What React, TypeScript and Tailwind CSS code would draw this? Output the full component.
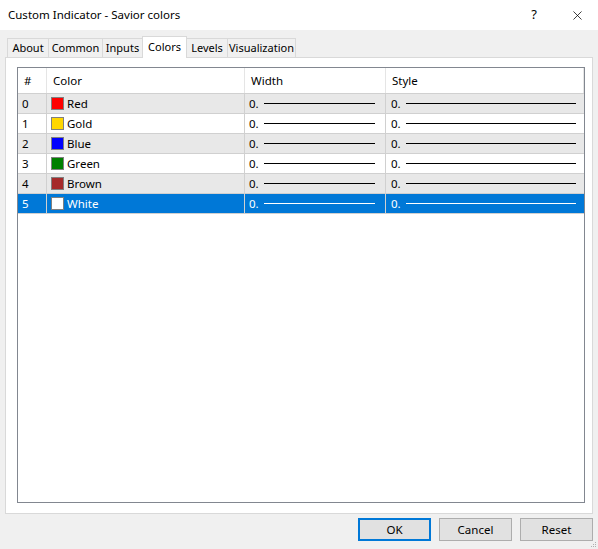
import { X } from 'lucide-react';

interface Row {
  id: number;
  name: string;
  color: string;
}

const rows: Row[] = [
  { id: 0, name: 'Red', color: 'bg-[#ff0000]' },
  { id: 1, name: 'Gold', color: 'bg-[#ffd700]' },
  { id: 2, name: 'Blue', color: 'bg-[#0000ff]' },
  { id: 3, name: 'Green', color: 'bg-[#008000]' },
  { id: 4, name: 'Brown', color: 'bg-[#a52a2a]' },
  { id: 5, name: 'White', color: 'bg-white' },
];

const tabs = [
  { label: 'About', w: 'w-[42px]' },
  { label: 'Common', w: 'w-[55px]' },
  { label: 'Inputs', w: 'w-[41px]' },
  { label: 'Colors', w: 'w-[45px]' },
  { label: 'Levels', w: 'w-[42px]' },
  { label: 'Visualization', w: 'w-[69px]' },
];

function Tab({ label, w, active }: { label: string; w: string; active: boolean }) {
  if (active) {
    return (
      <div className={`relative z-10 -mb-px -ml-px flex h-[22px] justify-center border border-b-0 border-[#d9d9d9] bg-white pt-[2px] text-[11px] ${w}`}>
        {label}
      </div>
    );
  }
  return (
    <div className={`-ml-px flex h-[19px] items-center justify-center border border-b-0 border-[#d9d9d9] bg-[#f0f0f0] text-[11px] first:ml-0 ${w}`}>
      {label}
    </div>
  );
}

export default function App() {
  return (
    <div className="flex h-[549px] w-[598px] flex-col bg-[#f0f0f0] text-[11.5px] text-black" style={{ fontFamily: '"Segoe UI", "Noto Sans", sans-serif' }}>
      <div className="flex h-[30px] items-center bg-white pl-[8px]">
        <span className="flex-1 text-[11.5px]">Custom Indicator - Savior colors</span>
        <span className="mr-[33px] text-[13px]">?</span>
        <X size={15} strokeWidth={1.2} className="mr-[13px]" />
      </div>

      <div className="flex flex-col px-[5px] pt-[6px]">
        <div className="flex items-end pl-[2px]">
          {tabs.map((t) => (
            <Tab key={t.label} label={t.label} w={t.w} active={t.label === 'Colors'} />
          ))}
        </div>
        <div className="flex h-[457px] flex-col border border-[#d9d9d9] bg-white pb-[10px] pl-[11px] pr-[7px] pt-[9px]">
          <div className="flex flex-1 flex-col border border-[#828790] bg-white">
            <div className="flex h-[26px] border-b border-[#d0d0d0]">
              <div className="flex w-[29px] items-center border-r border-[#e5e5e5] pl-[6px]">#</div>
              <div className="flex w-[198px] items-center border-r border-[#e5e5e5] pl-[6px]">Color</div>
              <div className="flex w-[141px] items-center border-r border-[#e5e5e5] pl-[6px]">Width</div>
              <div className="flex w-[198px] items-center border-r border-[#e5e5e5] pl-[6px]">Style</div>
            </div>
            {rows.map((r) => {
              const sel = r.id === 5;
              const bg = sel ? 'bg-[#0078d7] text-white' : r.id % 2 === 0 ? 'bg-[#e8e8e8]' : 'bg-white';
              const line = sel ? 'bg-white' : 'bg-black';
              return (
                <div key={r.id} className={`flex h-[20px] border-b border-[#d0d0d0] ${bg}`}>
                  <div className="flex w-[29px] items-center border-r border-[#d0d0d0] pl-[4px]">{r.id}</div>
                  <div className="flex w-[198px] items-center border-r border-[#d0d0d0] pl-[4px]">
                    <span className={`mr-[3px] h-[13px] w-[13px] border border-[#808080] ${r.color}`} />
                    {r.name}
                  </div>
                  <div className="flex w-[141px] items-center border-r border-[#d0d0d0] pl-[4px] pr-[10px]">
                    <span>0.</span>
                    <span className={`ml-[5px] h-px flex-1 ${line}`} />
                  </div>
                  <div className="flex w-[198px] items-center pl-[5px] pr-[8px]">
                    <span>0.</span>
                    <span className={`ml-[5px] h-px flex-1 ${line}`} />
                  </div>
                </div>
              );
            })}
          </div>
        </div>
      </div>

      <div className="relative flex flex-1 items-start justify-end gap-[8px] pr-[5px] pt-[4px]">
        <button className="h-[23px] w-[73px] border-2 border-[#0078d7] bg-[#e1e1e1]">OK</button>
        <button className="h-[23px] w-[73px] border border-[#adadad] bg-[#e1e1e1]">Cancel</button>
        <button className="h-[23px] w-[73px] border border-[#adadad] bg-[#e1e1e1]">Reset</button>
        <svg className="absolute bottom-[1px] right-[1px]" width="6" height="6" viewBox="0 0 6 6">
          <rect x="4" y="0" width="1" height="1" fill="#b0b0b0" />
          <rect x="2" y="2" width="1" height="1" fill="#b0b0b0" />
          <rect x="4" y="2" width="1" height="1" fill="#b0b0b0" />
          <rect x="0" y="4" width="1" height="1" fill="#b0b0b0" />
          <rect x="2" y="4" width="1" height="1" fill="#b0b0b0" />
          <rect x="4" y="4" width="1" height="1" fill="#b0b0b0" />
        </svg>
      </div>
    </div>
  );
}
